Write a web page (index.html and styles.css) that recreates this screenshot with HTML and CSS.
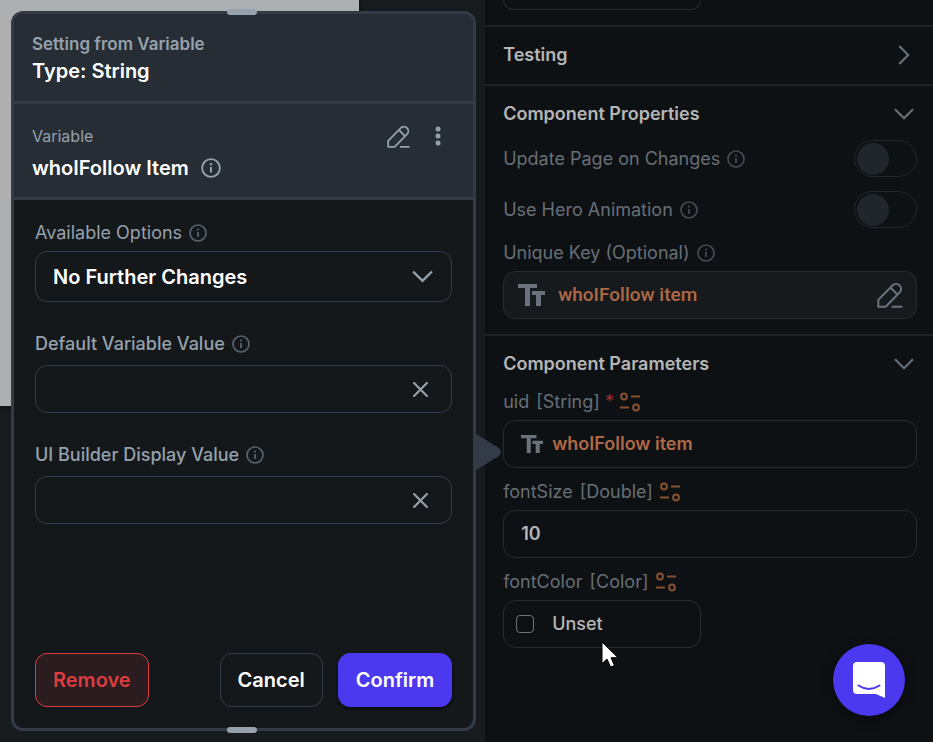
FILE: index.html
```html
<!DOCTYPE html>
<html lang="en">
<head>
<meta charset="utf-8">
<title>Component settings</title>
<link rel="stylesheet" href="styles.css">
</head>
<body>
<svg class="defs" aria-hidden="true">
  <symbol id="info" viewBox="0 0 20 20"><circle cx="10" cy="10" r="8.9" fill="none" stroke="currentColor" stroke-width="1.9"/><path d="M10 9v5.4" stroke="currentColor" stroke-width="2"/><circle cx="10" cy="6.2" r="1.2" fill="currentColor"/></symbol>
  <symbol id="chevron" viewBox="0 0 20 12"><path d="M1 1.2l9 9 9-9" fill="none" stroke="currentColor" stroke-width="2.2"/></symbol>
  <symbol id="close" viewBox="0 0 14 14"><path d="M1 1l12 12M13 1L1 13" fill="none" stroke="currentColor" stroke-width="2" stroke-linecap="round"/></symbol>
  <symbol id="edit" viewBox="0 0 24 24"><path d="M1.2 22.8v-6.300L14.500 3a4.600 4.600 0 0 1 6.500 6.500L8 22.800zM12.500 5.200l6.300 6.300M13.500 22.800h10" fill="none" stroke="currentColor" stroke-width="1.900" stroke-linejoin="round"/></symbol>
  <symbol id="text" viewBox="0 0 27 22"><path d="M0 0h19v4h-7v18H7V4H0zM14 7h13v4h-4v11h-5V11h-4z" fill="currentColor"/></symbol>
  <symbol id="params" viewBox="0 0 20 20"><g fill="none" stroke="currentColor" stroke-width="2"><circle cx="4" cy="4.500" r="2.900"/><circle cx="16" cy="15.500" r="2.900"/><path d="M11 4.500h9M0 15.500h9"/></g></symbol>
</svg>

<div class="app">
  <main class="canvas">
    <div class="artboard"></div>
    <section class="popover" aria-label="Set from variable">
      <span class="handle handle-top"></span>
      <header class="head">
        <p class="eyebrow">Setting from Variable</p>
        <h1 class="strong">Type: String</h1>
      </header>
      <div class="variable">
        <div class="variable-text">
          <p class="kind">Variable</p>
          <h2 class="strong">whoIFollow Item <svg class="icon-info-lg"><use href="#info"/></svg></h2>
        </div>
        <div class="actions">
          <button class="icon-btn" aria-label="Edit"><svg class="icon-edit"><use href="#edit"/></svg></button>
          <button class="icon-btn" aria-label="More"><svg class="icon-more" viewBox="0 0 6 20"><g fill="currentColor"><circle cx="3" cy="3" r="2.5"/><circle cx="3" cy="10" r="2.5"/><circle cx="3" cy="17" r="2.5"/></g></svg></button>
        </div>
      </div>
      <form class="body">
        <div class="field field-select">
          <label class="label" for="opts">Available Options <svg class="icon-info"><use href="#info"/></svg></label>
          <div class="control">
            <select id="opts"><option>No Further Changes</option></select>
            <svg class="select-arrow"><use href="#chevron"/></svg>
          </div>
        </div>
        <div class="field">
          <label class="label medium" for="def">Default Variable Value <svg class="icon-info"><use href="#info"/></svg></label>
          <div class="control">
            <input id="def" type="text">
            <button class="icon-btn clear" type="button" aria-label="Clear"><svg class="icon-close"><use href="#close"/></svg></button>
          </div>
        </div>
        <div class="field">
          <label class="label medium" for="disp">UI Builder Display Value <svg class="icon-info"><use href="#info"/></svg></label>
          <div class="control">
            <input id="disp" type="text">
            <button class="icon-btn clear" type="button" aria-label="Clear"><svg class="icon-close"><use href="#close"/></svg></button>
          </div>
        </div>
        <div class="buttons">
          <button class="btn btn-remove" type="button">Remove</button>
          <button class="btn btn-cancel" type="button">Cancel</button>
          <button class="btn btn-confirm" type="button">Confirm</button>
        </div>
      </form>
      <span class="handle handle-bottom"></span>
      <svg class="pointer" viewBox="0 0 27 38"><path d="M0 0l23 14q7 5 0 10L0 38z" fill="currentColor"/></svg>
    </section>
  </main>

  <aside class="panel">
    <div class="section-cut"><div class="cut-box"></div></div>
    <section class="section testing">
      <h3 class="title">Testing</h3>
      <button class="icon-btn" aria-label="Expand"><svg class="icon-chevron closed"><use href="#chevron"/></svg></button>
    </section>
    <section class="section">
      <div class="title-row">
        <h3 class="title">Component Properties</h3>
        <button class="icon-btn" aria-label="Collapse"><svg class="icon-chevron"><use href="#chevron"/></svg></button>
      </div>
      <div class="toggles">
        <div class="toggle-row">
          <label class="label" for="upd">Update Page on Changes <svg class="icon-info"><use href="#info"/></svg></label>
          <input class="switch" id="upd" type="checkbox" role="switch">
        </div>
        <div class="toggle-row">
          <label class="label" for="hero">Use Hero Animation <svg class="icon-info"><use href="#info"/></svg></label>
          <input class="switch" id="hero" type="checkbox" role="switch">
        </div>
      </div>
      <div class="param">
        <label class="label" for="key">Unique Key (Optional) <svg class="icon-info"><use href="#info"/></svg></label>
        <div class="box box-filled">
          <svg class="icon-text-lg"><use href="#text"/></svg>
          <input class="key" id="key" type="text" value="whoIFollow item">
          <button class="icon-btn" aria-label="Edit"><svg class="icon-edit-lg"><use href="#edit"/></svg></button>
        </div>
      </div>
    </section>
    <section class="section last">
      <div class="title-row">
        <h3 class="title">Component Parameters</h3>
        <button class="icon-btn" aria-label="Collapse"><svg class="icon-chevron"><use href="#chevron"/></svg></button>
      </div>
      <div class="params">
        <div class="param">
          <label class="label" for="uid">uid <span class="type">[String]</span> <span class="required">*</span> <svg class="icon-params"><use href="#params"/></svg></label>
          <div class="box">
            <svg class="icon-text"><use href="#text"/></svg>
            <input class="linked" id="uid" type="text" value="whoIFollow item">
          </div>
        </div>
        <div class="param">
          <label class="label" for="size">fontSize <span class="type">[Double]</span> <svg class="icon-params"><use href="#params"/></svg></label>
          <div class="box"><input class="number" id="size" type="text" value="10"></div>
        </div>
        <div class="param">
          <label class="label" for="unset">fontColor <span class="type">[Color]</span> <svg class="icon-params"><use href="#params"/></svg></label>
          <div class="box box-color">
            <input class="check" id="unset" type="checkbox">
            <label class="unset" for="unset">Unset</label>
          </div>
        </div>
      </div>
    </section>
    <button class="chat" aria-label="Open chat">
      <svg class="chat-icon" viewBox="0 0 32 36"><path d="M4 0h24a4 4 0 0 1 4 4v32l-9-4H4a4 4 0 0 1-4-4V4a4 4 0 0 1 4-4z" fill="#fff"/><path d="M5.500 23.500q10.500 7 21 0" fill="none" stroke="#4b39ef" stroke-width="2" stroke-linecap="round"/></svg>
    </button>
    <svg class="cursor" viewBox="0 0 18 27"><path d="M1 1v21.500l5-4.500 3.500 8 4-1.500-3.500-7.800h7z" fill="#fff" stroke="#000" stroke-width="1"/></svg>
  </aside>
</div>
</body>
</html>
```
FILE: styles.css
```css
* { box-sizing: border-box; }

body {
  margin: 0;
  background: #171b1e;
  color: #95a1ac;
  font-family: Inter, "Liberation Sans", sans-serif;
  font-size: 18px;
  line-height: 24px;
}

h1, h2, h3, p { margin: 0; }
svg { display: block; flex: none; }
input, select, button { font: inherit; color: inherit; margin: 0; }
input, select { min-width: 0; border: 0; background: none; outline: 0; padding: 0; }

.defs { position: absolute; width: 0; height: 0; }

.app {
  display: grid;
  grid-template-columns: minmax(0, 1fr) 48%;
  height: 100vh;
  min-height: 720px;
  overflow: hidden;
}

/* Canvas */
.canvas { position: relative; }
.artboard {
  width: 74%;
  height: 406px;
  background: #adafb1;
  box-shadow: 0 0 4px #0a0c0e;
}

/* Variable popover */
.popover {
  position: absolute;
  z-index: 1;
  inset: 11px 9px 11px 11px;
  display: flex;
  flex-direction: column;
  border: 3px solid #323b46;
  border-radius: 12px;
  background: #14181b;
}
.handle {
  position: absolute;
  left: 50%;
  width: 30px;
  height: 6px;
  margin-left: -17px;
  border-radius: 3px;
  background: #95a1ac;
}
.handle-top { top: -5px; }
.handle-bottom { bottom: -5px; }
.pointer {
  position: absolute;
  left: 100%;
  top: 419px;
  width: 30px;
  height: 38px;
  color: #323b46;
}
.head, .variable {
  padding: 18px;
  background: #262d34;
  border-bottom: 3px solid #323b46;
}
.head { padding-bottom: 15px; border-radius: 9px 9px 0 0; }
.eyebrow { font-size: 17px; font-weight: 600; }
.strong {
  display: flex;
  align-items: center;
  gap: 12px;
  color: #fff;
  font-size: 20px;
  font-weight: 600;
  line-height: 30px;
}
.variable { display: flex; justify-content: space-between; padding-top: 20px; padding-bottom: 14px; }
.variable-text { display: grid; gap: 5px; }
.kind { font-size: 16px; line-height: 24px; }
.actions { display: flex; gap: 25px; height: 24px; padding-right: 14px; }

.icon-btn {
  display: flex;
  align-items: center;
  justify-content: center;
  padding: 0;
  border: 0;
  background: none;
}
.icon-info { width: 18px; height: 18px; color: #57636c; }
.icon-info-lg { width: 20px; height: 20px; color: #95a1ac; }
.icon-edit { width: 23px; height: 23px; }
.icon-more { width: 6px; height: 20px; }
.icon-close { width: 15px; height: 15px; }

.body {
  flex: 1;
  display: flex;
  flex-direction: column;
  gap: 29px;
  padding: 21px 21px 21px;
}
.field { display: grid; gap: 9px; }
.field-select { gap: 6px; }
.label { display: flex; align-items: center; gap: 7px; }
.medium { font-weight: 500; }
.control {
  position: relative;
  display: flex;
  align-items: center;
  height: 48px;
  border: 1px solid #343e49;
  border-radius: 12px;
}
.field + .field { margin-top: 1px; }
.control input { flex: 1; height: 100%; padding-left: 17px; }
.clear { padding-right: 23px; }
.field-select .control { height: 51px; }
.control select {
  flex: 1;
  height: 100%;
  padding: 0 48px 0 17px;
  appearance: none;
  color: #fff;
  font-size: 20px;
  font-weight: 600;
}
.select-arrow {
  position: absolute;
  right: 18px;
  width: 21px;
  height: 13px;
  pointer-events: none;
}

.buttons { display: flex; gap: 15px; margin-top: auto; }
.btn {
  height: 54px;
  padding: 0 17px;
  border: 1px solid #343e49;
  border-radius: 12px;
  background: none;
  color: #fff;
  font-size: 20px;
  font-weight: 600;
}
.btn-remove {
  margin-right: auto;
  border-color: #dc3d40;
  background: #2a1c1f;
  color: #dc3d40;
}
.btn-confirm { border-color: #4b39ef; background: #4b39ef; box-shadow: 0 2px 3px #0a0c0e; }

/* Properties panel */
.panel { position: relative; background: #0e1114; color: #676f76; }
.section-cut { height: 27px; padding: 0 18px; border-bottom: 2px solid #1c2126; }
.cut-box {
  width: 198px;
  height: 10px;
  border: 1px solid #272c33;
  border-top: 0;
  border-radius: 0 0 12px 12px;
}
.section { padding: 15px 16px 15px 18px; border-bottom: 2px solid #1c2126; }
.last { border-bottom: 0; }
.testing {
  display: flex;
  align-items: center;
  justify-content: space-between;
  height: 59px;
  padding-top: 0;
  padding-bottom: 2px;
}
.title-row { display: flex; justify-content: space-between; height: 26px; }
.title { color: #b6b6b6; font-size: 18px; font-weight: 600; line-height: 26px; }
.icon-chevron { width: 20px; height: 12px; margin-right: 3px; }
.closed { transform: rotate(-90deg); }

.panel .icon-info { color: #444b52; }
.toggles { display: grid; gap: 14px; margin: 13px 0; }
.toggle-row { display: flex; align-items: center; justify-content: space-between; }
.switch {
  appearance: none;
  display: flex;
  align-items: center;
  width: 63px;
  height: 37px;
  padding-left: 2px;
  border: 1px solid #22272c;
  border-radius: 19px;
}
.switch::before {
  content: "";
  width: 32px;
  height: 32px;
  border-radius: 50%;
  background: #21252c;
}

.param { display: grid; gap: 6px; }
.params { display: grid; gap: 12px; margin-top: 13px; }
.required { margin-right: -1px; margin-left: -2px; color: #a12d30; }
.icon-params { width: 20px; height: 20px; color: #85502f; }
.box {
  display: flex;
  align-items: center;
  height: 48px;
  padding: 0 17px;
  border: 1px solid #272c33;
  border-radius: 12px;
}
.box input[type="text"] { flex: 1; }
.box-filled { padding: 0 13px 0 14px; background: #171a1d; }
.icon-text-lg { width: 27px; height: 22px; margin-right: 13px; color: #6a737d; }
.icon-text { width: 22px; height: 18px; margin-right: 9px; color: #6a737d; }
.icon-edit-lg { width: 26px; height: 26px; color: #6a737d; }
.key { color: #b06946; font-family: Roboto, sans-serif; font-size: 19px; font-weight: 500; }
.linked { color: #b06946; font-weight: 600; }
.number { color: #b6b6b6; font-weight: 600; }
.box-color { width: 198px; gap: 18px; padding-left: 12px; }
.check {
  appearance: none;
  width: 18px;
  height: 18px;
  border: 1px solid #72767a;
  border-radius: 4px;
}
.unset { color: #b6b6b6; font-weight: 500; }

.chat {
  position: absolute;
  right: 28px;
  bottom: 26px;
  display: flex;
  align-items: center;
  justify-content: center;
  width: 72px;
  height: 72px;
  padding: 0;
  border: 0;
  border-radius: 50%;
  background: #4b39ef;
  box-shadow: 0 2px 12px #08090b;
}
.chat-icon { width: 32px; height: 36px; }
.cursor { position: absolute; left: 116px; top: 641px; width: 18px; height: 27px; }
```
